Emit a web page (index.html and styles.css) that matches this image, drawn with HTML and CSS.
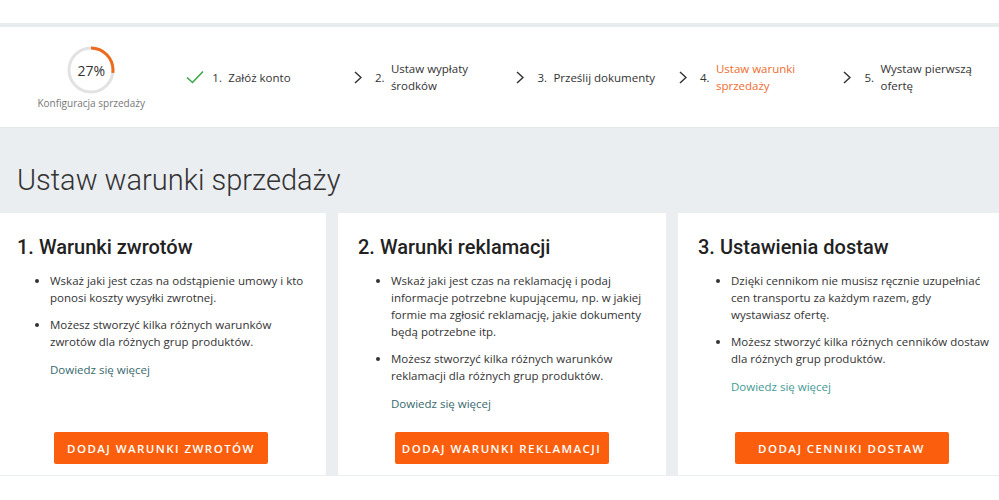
FILE: index.html
```html
<!DOCTYPE html>
<html lang="pl">
<head>
<meta charset="utf-8">
<link rel="stylesheet" href="styles.css">
</head>
<body>
<div class="topbar"></div>
<header class="steps">
  <div class="progress">
    <div class="ring">
      <svg width="48" height="48" viewBox="0 0 48 48">
        <circle cx="24" cy="24" r="22" fill="none" stroke="#e2e2e2" stroke-width="3"/>
        <circle cx="24" cy="24" r="22" fill="none" stroke="#ee6a1c" stroke-width="3" stroke-dasharray="37.3 200" transform="rotate(-90 24 24)"/>
      </svg>
      <span class="pct">27%</span>
    </div>
    <div class="ring-label">Konfiguracja sprzedaży</div>
  </div>
  <div class="step">
    <span class="icon"><svg width="18" height="14" viewBox="0 0 18 14"><path d="M1 7.5 L6.5 12.5 L17 1.5" fill="none" stroke="#3ba64a" stroke-width="1.6"/></svg></span>
    <span class="num">1.</span><span class="label">Załóż konto</span>
  </div>
  <div class="step">
    <span class="icon"><svg width="8" height="13" viewBox="0 0 8 13"><path d="M1 1 L7 6.5 L1 12" fill="none" stroke="#333" stroke-width="1.5"/></svg></span>
    <span class="num">2.</span><span class="label">Ustaw wypłaty środków</span>
  </div>
  <div class="step">
    <span class="icon"><svg width="8" height="13" viewBox="0 0 8 13"><path d="M1 1 L7 6.5 L1 12" fill="none" stroke="#333" stroke-width="1.5"/></svg></span>
    <span class="num">3.</span><span class="label">Prześlij dokumenty</span>
  </div>
  <div class="step current">
    <span class="icon"><svg width="8" height="13" viewBox="0 0 8 13"><path d="M1 1 L7 6.5 L1 12" fill="none" stroke="#333" stroke-width="1.5"/></svg></span>
    <span class="num">4.</span><span class="label">Ustaw warunki sprzedaży</span>
  </div>
  <div class="step">
    <span class="icon"><svg width="8" height="13" viewBox="0 0 8 13"><path d="M1 1 L7 6.5 L1 12" fill="none" stroke="#333" stroke-width="1.5"/></svg></span>
    <span class="num">5.</span><span class="label">Wystaw pierwszą ofertę</span>
  </div>
</header>
<main class="content">
  <h1 class="title">Ustaw warunki sprzedaży</h1>
  <div class="cards">
    <section class="card">
      <h2>1. Warunki zwrotów</h2>
      <ul>
        <li>Wskaż jaki jest czas na odstąpienie umowy i kto ponosi koszty wysyłki zwrotnej.</li>
        <li>Możesz stworzyć kilka różnych warunków zwrotów dla różnych grup produktów.</li>
      </ul>
      <a class="more" href="#">Dowiedz się więcej</a>
      <button class="btn">Dodaj warunki zwrotów</button>
    </section>
    <section class="card">
      <h2>2. Warunki reklamacji</h2>
      <ul>
        <li>Wskaż jaki jest czas na reklamację i podaj informacje potrzebne kupującemu, np. w jakiej formie ma zgłosić reklamację, jakie dokumenty będą potrzebne itp.</li>
        <li>Możesz stworzyć kilka różnych warunków reklamacji dla różnych grup produktów.</li>
      </ul>
      <a class="more" href="#">Dowiedz się więcej</a>
      <button class="btn">Dodaj warunki reklamacji</button>
    </section>
    <section class="card">
      <h2>3. Ustawienia dostaw</h2>
      <ul>
        <li>Dzięki cennikom nie musisz ręcznie uzupełniać cen transportu za każdym razem, gdy wystawiasz ofertę.</li>
        <li>Możesz stworzyć kilka różnych cenników dostaw dla różnych grup produktów.</li>
      </ul>
      <a class="more light" href="#">Dowiedz się więcej</a>
      <button class="btn">Dodaj cenniki dostaw</button>
    </section>
  </div>
</main>
</body>
</html>
```
FILE: styles.css
```css
* { box-sizing: border-box; }
html, body { margin: 0; padding: 0; background: #fff; overflow: hidden; }
body {
  font-family: "Open Sans", "Liberation Sans", sans-serif;
  color: #333;
  width: 999px;
  height: 500px;
}
.topbar {
  height: 27px;
  border-bottom: 4px solid #e7ecec;
}
.steps {
  height: 101px;
  display: flex;
  align-items: center;
  border-bottom: 1px solid #e3e8ea;
}
.progress {
  width: 188px;
  padding-right: 4px;
  display: flex;
  flex-direction: column;
  align-items: center;
  padding-top: 2px;
}
.ring {
  position: relative;
  width: 48px;
  height: 48px;
}
.ring svg { display: block; }
.pct {
  position: absolute;
  inset: 0;
  display: flex;
  align-items: center;
  justify-content: center;
  font-size: 14px;
  color: #333;
}
.ring-label {
  margin-top: 2px;
  font-size: 10px;
  color: #777;
}
.step {
  width: 164px;
  display: flex;
  align-items: center;
  font-size: 11.5px;
  line-height: 17px;
}
.step:last-child .icon { margin-left: 2px; }
.icon {
  width: 18px;
  display: flex;
  justify-content: center;
  margin-right: 8px;
}
.num { width: 16px; }
.label { max-width: 106px; }
.current .label { color: #ef6c2f; }

.content {
  background: #ebeef1;
  height: 348px;
  overflow: hidden;
}
.title {
  margin: 0;
  padding: 32px 0 0 17px;
  height: 85px;
  font-family: Roboto, sans-serif;
  font-weight: 300;
  font-size: 29px;
  line-height: 40px;
  color: #333;
}
.cards {
  display: grid;
  grid-template-columns: 329px 328px 328px;
  gap: 12px;
  margin-left: -3px;
  height: 262px;
}
.card {
  background: #fff;
  padding: 22px 14px 11px 20px;
  display: flex;
  flex-direction: column;
}
.card h2 {
  margin: 0;
  font-family: Roboto, sans-serif;
  font-weight: 500;
  font-size: 20px;
  line-height: 24px;
  color: #222;
}
.card ul {
  margin: 13px 0 0 0;
  padding-left: 33px;
  font-size: 11.5px;
  line-height: 17px;
}
.card li { margin-bottom: 10px; }
.more {
  margin-left: 33px;
  margin-top: 1px;
  font-size: 11.5px;
  line-height: 17px;
  color: #37696d;
  text-decoration: none;
}
.more.light { color: #3f9a95; }
.btn {
  margin-top: auto;
  align-self: center;
  margin-right: 7px;
  width: 214px;
  height: 32px;
  border: none;
  border-radius: 2px;
  background: #fb5e0c;
  color: #fff;
  font-family: "Open Sans", sans-serif;
  font-weight: 600;
  font-size: 11.5px;
  letter-spacing: 1.45px;
  white-space: nowrap;
  text-transform: uppercase;
  padding: 0;
}
```
